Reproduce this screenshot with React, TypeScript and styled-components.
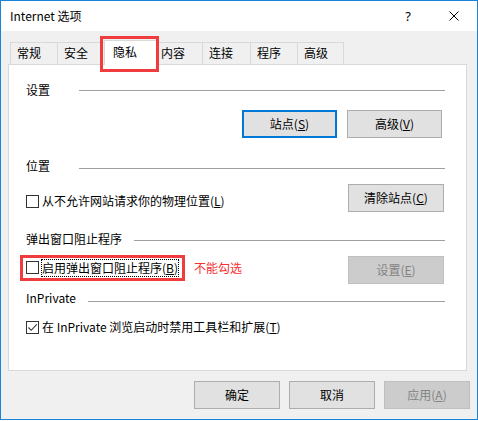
import React from 'react';
import styled, { createGlobalStyle, css } from 'styled-components';

const GlobalStyle = createGlobalStyle`
  html, body {
    margin: 0;
    padding: 0;
    background: #fff;
  }
  body {
    font-family: "Noto Sans CJK SC", "Noto Sans", sans-serif;
    font-size: 12px;
    color: #000;
  }
`;

const Window = styled.div`
  width: 478px;
  height: 420px;
  box-sizing: border-box;
  border: 1px solid #1883d7;
  background: #f0f0f0;
  display: flex;
  flex-direction: column;
`;

const TitleBar = styled.div`
  height: 30px;
  flex: none;
  background: #fff;
  display: flex;
  align-items: center;
  padding-left: 9px;
`;

const Title = styled.div`
  flex: 1;
  line-height: 16px;
`;

const CaptionButton = styled.div`
  width: 46px;
  height: 30px;
  display: flex;
  align-items: center;
  justify-content: center;
  font-family: "Noto Sans", sans-serif;
  font-size: 13px;
`;

const Body = styled.div`
  flex: 1;
  padding: 9px 10px 0 7px;
  display: flex;
  flex-direction: column;
`;

const TabRow = styled.div`
  display: flex;
  align-items: flex-end;
  height: 24px;
  padding-left: 2px;
  position: relative;
  z-index: 1;
`;

const Tab = styled.div<{ $w: number; $active?: boolean }>`
  box-sizing: border-box;
  width: ${p => p.$w}px;
  height: 22px;
  margin-right: -1px;
  border: 1px solid #d9d9d9;
  border-bottom: none;
  background: #f0f0f0;
  padding-left: 6px;
  line-height: 20px;
  position: relative;
  white-space: nowrap;
  ${p =>
    p.$active &&
    css`
      width: ${p.$w + 4}px;
      height: 25px;
      margin: 0 -3px -1px -2px;
      background: #fff;
      padding-left: 8px;
      line-height: 21px;
      z-index: 2;
      &::after {
        content: '';
        position: absolute;
        left: -5px;
        right: -3px;
        top: -5px;
        bottom: -7px;
        border: 3px solid #f03c3c;
      }
    `}
`;

const Panel = styled.div`
  box-sizing: border-box;
  height: 307px;
  background: #fff;
  border: 1px solid #d9d9d9;
  padding: 17px 22px 0 17px;
  display: flex;
  flex-direction: column;
`;

const Heading = styled.div<{ $gap: number }>`
  display: flex;
  align-items: center;
  height: 16px;
  line-height: 16px;
  margin-top: ${p => p.$gap}px;
`;

const HeadingText = styled.span`
  box-sizing: border-box;
  min-width: 53px;
  padding-right: 12px;
  white-space: nowrap;
`;

const Rule = styled.span<{ $drop: number }>`
  flex: 1;
  height: 1px;
  background: #a0a0a0;
  margin-top: ${p => p.$drop * 2}px;
  margin-right: -1px;
`;

const OptionRow = styled.div<{ $gap: number; $h?: number }>`
  display: flex;
  align-items: center;
  justify-content: space-between;
  margin-top: ${p => p.$gap}px;
  height: ${p => (p.$h ? `${p.$h}px` : 'auto')};
`;

const ButtonGroup = styled.div`
  display: flex;
  gap: 10px;
  margin-left: auto;
  padding-right: 2px;
`;

const LeftGroup = styled.div<{ $shift: number }>`
  display: flex;
  align-items: center;
  margin-top: ${p => p.$shift * 2}px;
`;

const Button = styled.button<{ $w: number; $primary?: boolean }>`
  box-sizing: border-box;
  width: ${p => p.$w}px;
  height: 28px;
  padding: 0;
  border: 1px solid #adadad;
  border-radius: 0;
  background: #e1e1e1;
  color: #000;
  font: inherit;
  line-height: 16px;
  ${p =>
    p.$primary &&
    css`
      border: 2px solid #0078d7;
    `}
  &:disabled {
    background: #cccccc;
    border-color: #bfbfbf;
    color: #838383;
  }
`;

const CheckItem = styled.label<{ $marked?: boolean }>`
  display: inline-flex;
  align-items: center;
  position: relative;
  ${p =>
    p.$marked &&
    css`
      &::after {
        content: '';
        position: absolute;
        left: -6px;
        right: -6px;
        top: -4px;
        bottom: -4px;
        border: 3px solid #f03c3c;
      }
    `}
`;

const Box = styled.span`
  box-sizing: border-box;
  width: 13px;
  height: 13px;
  margin-right: 2px;
  border: 1px solid #333;
  background: #fff;
  display: flex;
  align-items: center;
  justify-content: center;
`;

const CheckText = styled.span<{ $focus?: boolean }>`
  line-height: 16px;
  padding: 1px 1px;
  white-space: nowrap;
  ${p =>
    p.$focus &&
    css`
      outline: 1px dotted #000;
      outline-offset: -1px;
    `}
`;

const Note = styled.span`
  margin-left: 15px;
  color: #f5302f;
  line-height: 16px;
`;

const Footer = styled.div`
  display: flex;
  justify-content: flex-end;
  gap: 9px;
  margin: 10px -3px 0 0;
`;

const tabs = [
  { label: '常规', w: 48 },
  { label: '安全', w: 50 },
  { label: '隐私', w: 49, active: true },
  { label: '内容', w: 49 },
  { label: '连接', w: 49 },
  { label: '程序', w: 48 },
  { label: '高级', w: 47 },
];

const Check = ({ checked }: { checked?: boolean }) => (
  <Box>
    {checked && (
      <svg width="11" height="11" viewBox="0 0 11 11">
        <path d="M1.5 5.5 L4.2 8.3 L9.8 2.4" fill="none" stroke="#333" strokeWidth="1.1" />
      </svg>
    )}
  </Box>
);

export default function App() {
  return (
    <>
      <GlobalStyle />
      <Window>
        <TitleBar>
          <Title>Internet 选项</Title>
          <CaptionButton>?</CaptionButton>
          <CaptionButton>
            <svg width="10" height="10" viewBox="0 0 10 10">
              <path d="M0.5 0.5 L9.5 9.5 M9.5 0.5 L0.5 9.5" stroke="#000" strokeWidth="1" />
            </svg>
          </CaptionButton>
        </TitleBar>
        <Body>
          <TabRow>
            {tabs.map(t => (
              <Tab key={t.label} $w={t.w} $active={t.active}>
                {t.label}
              </Tab>
            ))}
          </TabRow>
          <Panel>
            <Heading $gap={0}>
              <HeadingText>设置</HeadingText>
              <Rule $drop={0} />
            </Heading>
            <OptionRow $gap={12} $h={28}>
              <ButtonGroup>
                <Button $w={95} $primary>
                  站点(<u>S</u>)
                </Button>
                <Button $w={95}>
                  高级(<u>V</u>)
                </Button>
              </ButtonGroup>
            </OptionRow>

            <Heading $gap={20}>
              <HeadingText>位置</HeadingText>
              <Rule $drop={2.5} />
            </Heading>
            <OptionRow $gap={10} $h={28}>
              <LeftGroup $shift={3}>
                <CheckItem>
                  <Check />
                  <CheckText>
                    从不允许网站请求你的物理位置(<u>L</u>)
                  </CheckText>
                </CheckItem>
              </LeftGroup>
              <Button $w={96}>
                清除站点(<u>C</u>)
              </Button>
            </OptionRow>

            <Heading $gap={19}>
              <HeadingText>弹出窗口阻止程序</HeadingText>
              <Rule $drop={1.5} />
            </Heading>
            <OptionRow $gap={9} $h={28}>
              <LeftGroup $shift={-2.5}>
                <CheckItem $marked>
                  <Check />
                  <CheckText $focus>
                    启用弹出窗口阻止程序(<u>B</u>)
                  </CheckText>
                </CheckItem>
                <Note>不能勾选</Note>
              </LeftGroup>
              <Button $w={96} disabled>
                设置(<u>E</u>)
              </Button>
            </OptionRow>

            <Heading $gap={6}>
              <HeadingText>InPrivate</HeadingText>
              <Rule $drop={3} />
            </Heading>
            <OptionRow $gap={12}>
              <CheckItem>
                <Check checked />
                <CheckText>
                  在 InPrivate 浏览启动时禁用工具栏和扩展(<u>T</u>)
                </CheckText>
              </CheckItem>
            </OptionRow>
          </Panel>
          <Footer>
            <Button $w={86}>确定</Button>
            <Button $w={86}>取消</Button>
            <Button $w={86} disabled>
              应用(<u>A</u>)
            </Button>
          </Footer>
        </Body>
      </Window>
    </>
  );
}
